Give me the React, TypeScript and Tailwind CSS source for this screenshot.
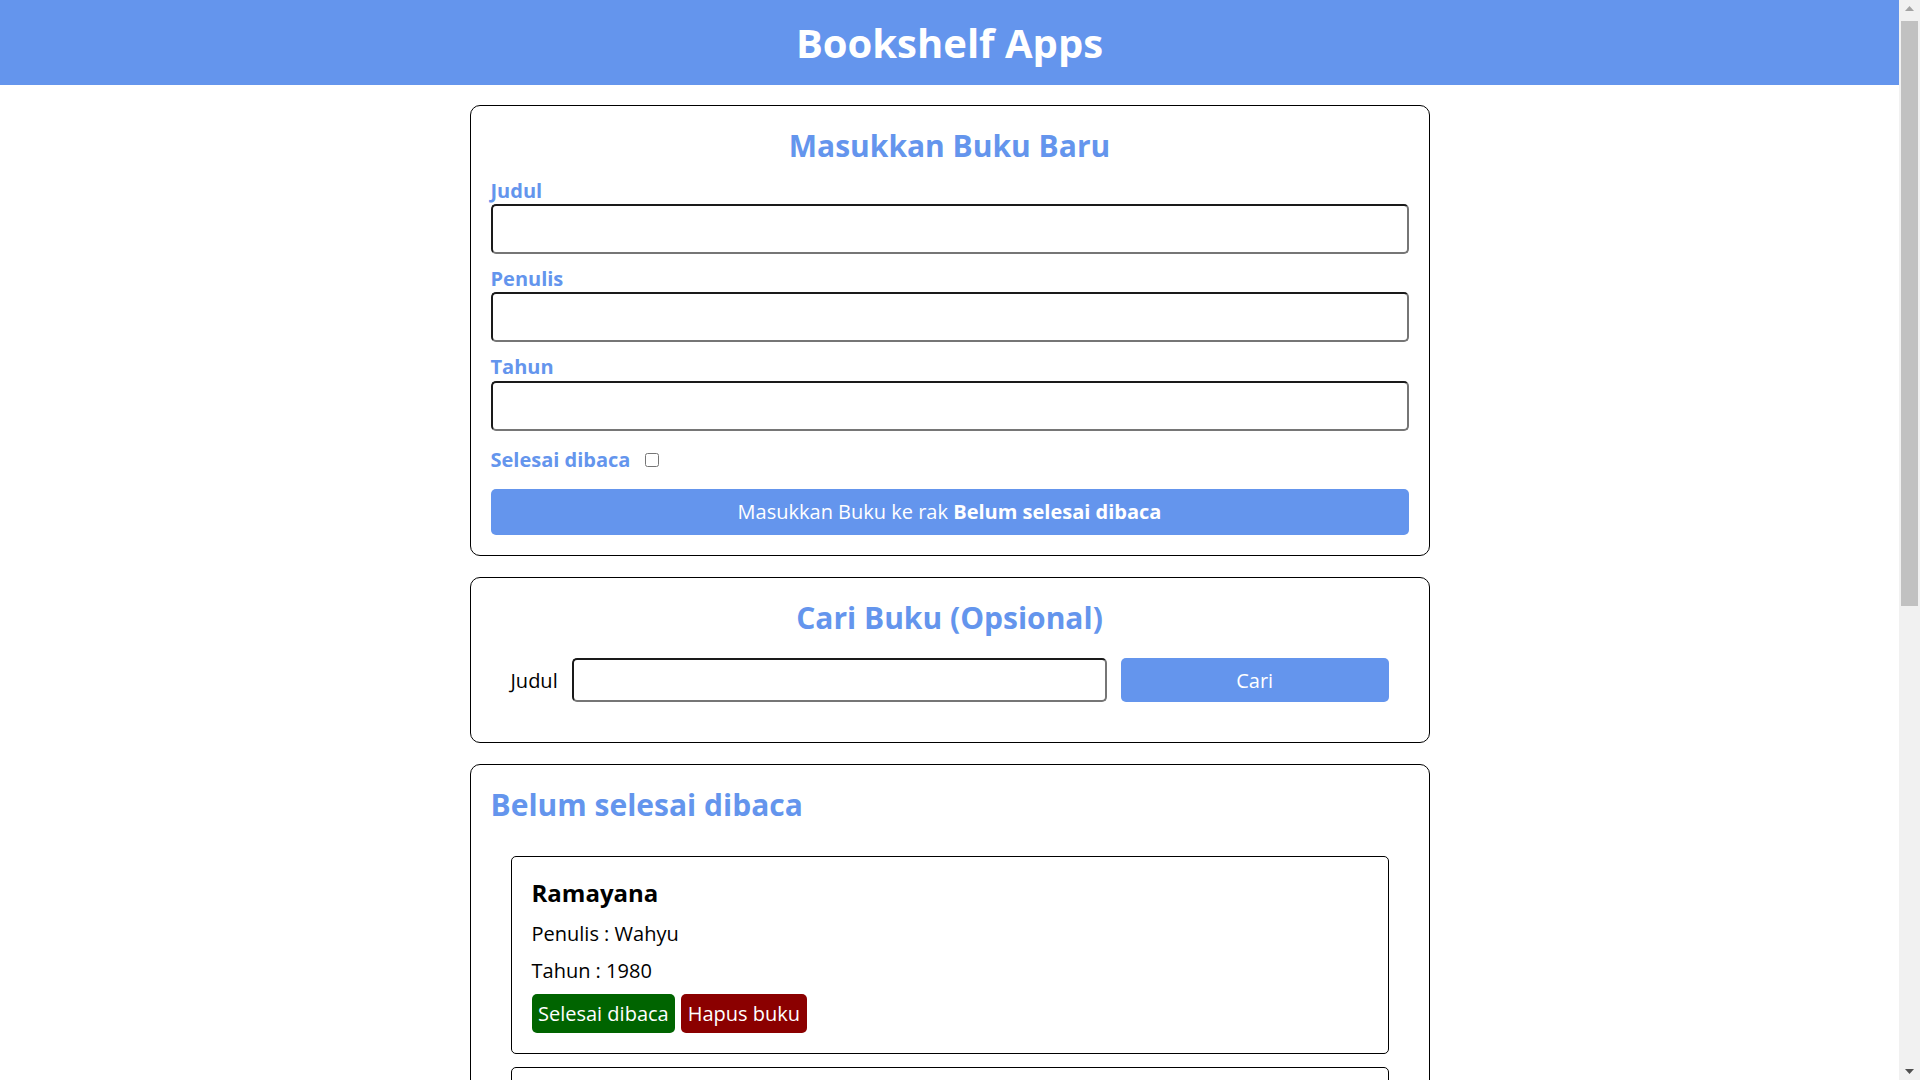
import { FC } from 'react'

interface Book {
  id: number
  title: string
  author: string
  year: number
}

const unread: Book[] = [
  { id: 1, title: 'Ramayana', author: 'Wahyu', year: 1980 },
  { id: 2, title: 'Mahabharata', author: 'Vyasa', year: 1975 },
]

const read: Book[] = [
  { id: 3, title: 'Laskar Pelangi', author: 'Andrea Hirata', year: 2005 },
  { id: 4, title: 'Bumi Manusia', author: 'Pramoedya Ananta Toer', year: 1980 },
]

const inputClass =
  'w-full rounded-[5px] border-2 border-t-[#1a1a1a] border-l-[#1a1a1a] border-b-[#767676] border-r-[#767676] bg-white px-2 outline-none'

const BookItem: FC<{ book: Book; done?: boolean }> = ({ book, done }) => (
  <article className="rounded-[5px] border border-black p-5">
    <h3 className="mb-[10px] text-[24px] font-bold leading-[1.362]">{book.title}</h3>
    <p className="mb-[10px]">Penulis : {book.author}</p>
    <p className="mb-[10px]">Tahun : {book.year}</p>
    <div className="flex gap-[6px]">
      <button className="h-[39px] rounded-[5px] bg-[#006400] px-[6.5px] text-white">
        {done ? 'Belum selesai di Baca' : 'Selesai dibaca'}
      </button>
      <button className="h-[39px] rounded-[5px] bg-[#8b0000] px-[6.5px] text-white">
        Hapus buku
      </button>
    </div>
  </article>
)

const Field: FC<{ label: string; type?: string }> = ({ label, type = 'text' }) => (
  <div className="mb-[11px]">
    <label className="block font-bold text-[#6495ed]">{label}</label>
    <input type={type} className={`${inputClass} h-[50px]`} />
  </div>
)

// the browser's scrollbar as seen in the screenshot
const ScrollBar: FC = () => (
  <div className="flex w-[21px] shrink-0 flex-col bg-[#f1f1f1]">
    <div className="flex h-[17px] items-center justify-center">
      <svg width="9" height="5" viewBox="0 0 9 5">
        <path d="M0 5 L4.5 0 L9 5 Z" fill="#a3a3a3" />
      </svg>
    </div>
    <div className="flex-1 pt-[4px] pl-[2px] pr-[2px]">
      <div className="h-[585px] bg-[#c1c1c1]" />
    </div>
    <div className="flex h-[17px] items-center justify-center">
      <svg width="9" height="5" viewBox="0 0 9 5">
        <path d="M0 0 L4.5 5 L9 0 Z" fill="#505050" />
      </svg>
    </div>
  </div>
)

const App: FC = () => {
  return (
    <div className="flex h-screen bg-white text-[20px] leading-[1.362] text-black [font-family:'Open_Sans',sans-serif]">
      <div className="flex-1 overflow-y-auto">
        <header className="bg-[#6495ed] py-[15px] text-center">
          <h1 className="text-[40px] leading-[55px] font-bold text-white">Bookshelf Apps</h1>
        </header>

        <main className="mx-auto flex w-[960px] flex-col gap-[21px] py-5">
          <section className="rounded-[10px] border border-black p-5">
            <h2 className="mb-[10px] text-center text-[30px] font-bold leading-[1.362] text-[#6495ed]">
              Masukkan Buku Baru
            </h2>
            <form onSubmit={(e) => e.preventDefault()}>
              <Field label="Judul" />
              <Field label="Penulis" />
              <Field label="Tahun" type="number" />
              <div className="mb-[11px] flex h-[36px] items-center">
                <label className="font-bold text-[#6495ed]">Selesai dibaca</label>
                <input type="checkbox" className="ml-[15px] h-[14px] w-[14px]" />
              </div>
              <button className="h-[46px] w-full rounded-[5px] bg-[#6495ed] text-white">
                Masukkan Buku ke rak <span className="font-bold">Belum selesai dibaca</span>
              </button>
            </form>
          </section>

          <section className="rounded-[10px] border border-black p-5">
            <h2 className="text-center text-[30px] font-bold leading-[1.362] text-[#6495ed]">
              Cari Buku (Opsional)
            </h2>
            <form
              onSubmit={(e) => e.preventDefault()}
              className="grid grid-cols-[auto_2fr_1fr] items-center gap-[14px] p-5"
            >
              <label>Judul</label>
              <input type="text" className={`${inputClass} h-[44px]`} />
              <button className="h-[44px] rounded-[5px] bg-[#6495ed] text-white">Cari</button>
            </form>
          </section>

          <section className="rounded-[10px] border border-black p-5">
            <h2 className="mb-[10px] text-[30px] font-bold leading-[1.362] text-[#6495ed]">
              Belum selesai dibaca
            </h2>
            <div className="flex flex-col gap-[13px] p-5">
              {unread.map((b) => (
                <BookItem key={b.id} book={b} />
              ))}
            </div>
          </section>

          <section className="rounded-[10px] border border-black p-5">
            <h2 className="mb-[10px] text-[30px] font-bold leading-[1.362] text-[#6495ed]">
              Selesai dibaca
            </h2>
            <div className="flex flex-col gap-[13px] p-5">
              {read.map((b) => (
                <BookItem key={b.id} book={b} done />
              ))}
            </div>
          </section>
        </main>
      </div>
      <ScrollBar />
    </div>
  )
}

export default App
